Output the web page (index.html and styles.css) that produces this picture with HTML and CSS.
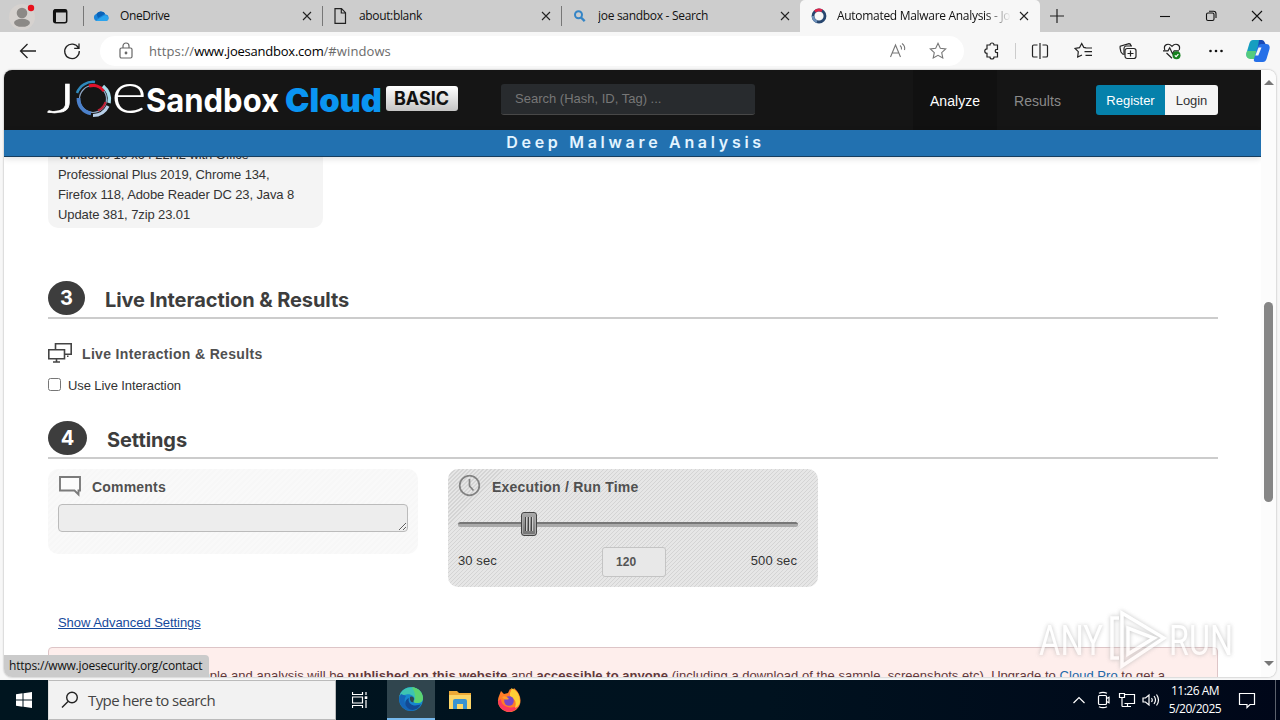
FILE: index.html
```html
<!DOCTYPE html>
<html lang="en">
<head>
    <meta charset="UTF-8">
    <title>Automated Malware Analysis - Joe Sandbox Cloud Basic</title>
    <link rel="stylesheet" href="styles.css">
</head>
<body>
<div class="screen">
    <!-- tab strip -->
    <div class="tabs">
        <div class="profile">
            <svg width="36" height="32" viewBox="0 0 36 32"><circle cx="22" cy="17" r="13" fill="#d6d2cf"/><circle cx="22" cy="13" r="5.300" fill="#8c8986"/><ellipse cx="22" cy="22.800" rx="8" ry="4" fill="#8c8986"/><circle cx="31" cy="8" r="3.200" fill="#e8101c"/></svg>
            <svg width="48" height="32" viewBox="0 0 48 32"><rect x="17.700" y="9.700" width="13" height="13" rx="2" fill="none" stroke="#111" stroke-width="1.500"/><path d="M18 11h12.500" stroke="#111" stroke-width="3"/><path d="M19 12v10" stroke="#111" stroke-width="2"/></svg>
        </div>
        <div class="tab">
            <svg class="tab-icon" viewBox="0 0 16 16"><path d="M4 13a3.600 3.600 0 0 1-.5-7A5 5 0 0 1 12.500 6.500 3.300 3.300 0 0 1 13 13z" fill="#1a84d8"/><path d="M3.500 6A5 5 0 0 1 12 5.800L5 10z" fill="#0a62b8"/><path d="M3 12.500 11 7.500a3.200 3.200 0 0 1 4 4.500 3 3 0 0 1-2 1H4z" fill="#2ba4ee"/></svg>
            <span class="tab-title t-onedrive">OneDrive</span>
            <svg class="tab-close" viewBox="0 0 10 10"><path d="M1 1l8 8M9 1l-8 8"/></svg>
        </div>
        <div class="tab">
            <svg class="tab-icon" viewBox="0 0 16 16"><path d="M3 .7h6.500l4 4v10.600H3zM9.300 1v4h4" fill="none" stroke="#222" stroke-width="1.200"/></svg>
            <span class="tab-title t-blank">about:blank</span>
            <svg class="tab-close" viewBox="0 0 10 10"><path d="M1 1l8 8M9 1l-8 8"/></svg>
        </div>
        <div class="tab">
            <svg class="tab-icon" viewBox="0 0 16 16"><circle cx="7.500" cy="6.800" r="3.500" fill="none" stroke="#3585c6" stroke-width="2"/><path d="M10 9.500l3.700 3.700" stroke="#3585c6" stroke-width="2.400"/></svg>
            <span class="tab-title t-search">joe sandbox - Search</span>
            <svg class="tab-close" viewBox="0 0 10 10"><path d="M1 1l8 8M9 1l-8 8"/></svg>
        </div>
        <div class="tab active">
            <svg class="tab-icon" viewBox="0 0 16 16"><circle cx="8" cy="8" r="6" fill="none" stroke="#27466f" stroke-width="2.800"/><path d="M4 3.500A6 6 0 0 1 11 2.800" fill="none" stroke="#e0244a" stroke-width="2.800"/><path d="M2 8a6 6 0 0 0 4 5.700" fill="none" stroke="#6d8fb9" stroke-width="2.500"/></svg>
            <span class="tab-title t-active">Automated Malware Analysis - Jo</span>
            <svg class="tab-close" viewBox="0 0 10 10"><path d="M1 1l8 8M9 1l-8 8"/></svg>
        </div>
        <svg class="new-tab" viewBox="0 0 14 14"><path d="M7 0v14M0 7h14"/></svg>
        <div class="window-buttons">
            <svg viewBox="0 0 12 12"><path d="M1 6.500h10"/></svg>
            <svg viewBox="0 0 12 12"><rect x="1.500" y="3" width="7.500" height="7.500" rx="1.500"/><path d="M4 1.200h4.500a2.500 2.500 0 0 1 2.500 2.500V8"/></svg>
            <svg viewBox="0 0 12 12"><path d="M1 1l10 10M11 1L1 11"/></svg>
        </div>
    </div>

    <!-- address bar -->
    <div class="toolbar">
        <svg class="nav-icon" viewBox="0 0 20 20"><path d="M18 10H2.500M9.500 3L2.500 10l7 7"/></svg>
        <svg class="nav-icon" viewBox="0 0 20 20"><path d="M16.500 7A7.300 7.300 0 1 0 17.300 10M17 2.500V7.300h-4.800"/></svg>
        <div class="address">
            <svg class="lock" viewBox="0 0 16 18"><rect x="2" y="6" width="12" height="10" rx="1.500"/><path d="M5 6V4a3 3 0 0 1 6 0v2"/><circle cx="8" cy="11" r=".8" fill="#666"/></svg>
            <span class="url"><span>https://</span><b>www.joesandbox.com</b><span>/#windows</span></span>
            <svg class="addr-icon" viewBox="0 0 20 20"><path d="M2.500 16L7.500 4l5 12M4.300 12h6.400M12 4.500q2 1.500 1.500 4M14 2.500q3.500 2.500 2.500 6.500"/></svg>
            <svg class="addr-icon" viewBox="0 0 20 20"><path d="M10 2.300l2.300 5 5.400.6-4 3.700 1.100 5.400-4.800-2.700L5.200 17l1.100-5.400-4-3.700 5.400-.6z"/></svg>
        </div>
        <div class="tools">
            <svg viewBox="0 0 20 20"><path d="M6 4h3a2 2 0 0 1 4 0h3.500v4.300h-.6a1.700 1.700 0 0 0 0 3.400h.6V16H13a2 2 0 0 1-4 0H6v-3.700a2.200 2.200 0 0 1 0-4.500z"/></svg>
            <i></i>
            <svg viewBox="0 0 20 20"><path d="M7.500 4H3.800Q2.500 4 2.500 5.300v9.400Q2.500 16 3.800 16h3.700M12.500 4h3.700q1.300 0 1.300 1.300v9.400q0 1.300-1.300 1.300h-3.700M10 2v16"/></svg>
            <svg viewBox="0 0 20 20"><path d="M12 6.800l-2.200-.4L7.700 2.500 5.500 6.700l-4.400.7 3.200 3.200-.6 5.400L8 14M11.500 7H18M10.500 10.700H18M11.500 14.300H18"/></svg>
            <svg viewBox="0 0 20 20"><path d="M5 13.500L3 11Q1.700 6.500 2.200 5.300L11 2.600q1.500 0 2 2M6 14V7.500Q6 5.300 8 5h6"/><rect x="7" y="7.500" width="11" height="10" rx="2.200"/><path d="M12.500 9.500v6M9.500 12.500h6"/></svg>
            <svg viewBox="0 0 20 20"><path d="M2.800 9C1 3.500 6.500 1.500 10 5.300 13.500 1.500 19 3.500 17.200 9M1 9.800h5l1.700-3 2.800 6 1.700-3H17M4.500 12l5.500 5.200"/><circle cx="14.500" cy="14.300" r="4" fill="#16811e" stroke="none"/><path d="M12.800 14.300l1.300 1.300 2.300-2.500" stroke="#fff"/></svg>
            <svg viewBox="0 0 20 20"><g fill="#111" stroke="none"><circle cx="4.500" cy="10" r="1.300"/><circle cx="10" cy="10" r="1.300"/><circle cx="15.500" cy="10" r="1.300"/></g></svg>
        </div>
        <svg class="copilot" viewBox="0 0 24 24"><path d="M7 1h8q2 0 1.300 2.500L13 16q-1 3-3.500 3H4Q-.5 19 .5 14L3.500 4Q4.500 1 7 1z" fill="#159ec0"/><path d="M1 12h12l-1 5q-1 3-3 3H4Q-.5 19 .5 14z" fill="#55cb7d"/><path d="M17 23H10q-3 0-2-3l3.200-11Q12 5 15 5h5q4.500 0 3.500 5l-3 10q-1 3-3.500 3z" fill="#2670e8"/><path d="M13 1h3q2 0 2.800 2.500L19.500 5H15q-2 0-3 3z" fill="#1749b5"/><path d="M12.500 8.500h3l-3.200 8h-3z" fill="#f7f7f7"/></svg>
    </div>

    <div class="viewport">
        <div class="page">
            <header class="site-header">
                <svg class="logo" width="412" height="48" viewBox="0 0 412 48">
                    <defs><linearGradient id="badge" x1="0" y1="0" x2="0" y2="1"><stop offset="0" stop-color="#fff"/><stop offset="1" stop-color="#c4c4c4"/></linearGradient></defs>
                    <text class="logo-thin" x="-1" y="36.500" textLength="29" lengthAdjust="spacingAndGlyphs">J</text>
                    <circle cx="45" cy="23" r="13.500" fill="none" stroke="#8fa6c4" stroke-width="1.200"/>
                    <g fill="none">
                        <path d="M29 17A17 17 0 0 1 47 6" stroke="#2f88bb" stroke-width="2.500"/>
                        <path d="M41 10A14 14 0 0 1 56 15" stroke="#e0122b" stroke-width="3.200"/>
                        <path d="M55 10A17 17 0 0 1 61 27" stroke="#a6dcec" stroke-width="3.500"/>
                        <path d="M30.500 22A15 15 0 0 0 43 37.500" stroke="#4b80cb" stroke-width="3.800"/>
                        <path d="M45 39.500A17 17 0 0 0 60 30" stroke="#b7cfe9" stroke-width="3.200"/>
                        <path d="M57.500 26A13 13 0 0 1 50 34.500" stroke="#be2238" stroke-width="2.200"/>
                    </g>
                    <text class="logo-thin logo-e" x="63" y="37" textLength="36" lengthAdjust="spacingAndGlyphs">e</text>
                    <text class="logo-bold" x="98" y="36" textLength="133" lengthAdjust="spacingAndGlyphs">Sandbox</text>
                    <text class="logo-bold logo-cloud" x="237" y="36" textLength="97" lengthAdjust="spacingAndGlyphs">Cloud</text>
                    <rect x="338" y="10" width="72" height="25" rx="3" fill="url(#badge)"/>
                    <text class="logo-basic" x="346" y="29" textLength="55" lengthAdjust="spacingAndGlyphs">BASIC</text>
                </svg>
                <input class="search" type="text" placeholder="Search (Hash, ID, Tag) ...">
                <nav class="nav">
                    <a class="nav-link current"><span>Analyze</span></a>
                    <a class="nav-link"><span>Results</span></a>
                </nav>
                <div class="account">
                    <button class="register">Register</button><button class="login">Login</button>
                </div>
            </header>
            <div class="banner">Deep Malware Analysis</div>

            <main class="content">
                <div class="machine">Windows 10 x64 22H2 with Office<br>Professional Plus 2019, Chrome 134,<br>Firefox 118, Adobe Reader DC 23, Java 8<br>Update 381, 7zip 23.01</div>

                <div class="step">
                    <span class="step-number">3</span>
                    <h2 class="h-live">Live Interaction &amp; Results</h2>
                </div>
                <div class="option-title">
                    <svg width="24" height="20" viewBox="0 0 24 20"><path d="M7.500 6V.8h15.700v10.400H17M.8 6.800h15.700v9H.8zM19 13.300h1.500M8.500 16v3M5 19h7" fill="none" stroke="#444" stroke-width="1.600"/></svg>
                    <h3 class="h3-live">Live Interaction &amp; Results</h3>
                </div>
                <label class="check"><input type="checkbox"><span>Use Live Interaction</span></label>

                <div class="step step-settings">
                    <span class="step-number wide">4</span>
                    <h2 class="h-settings">Settings</h2>
                </div>
                <div class="panels">
                    <div class="panel comments">
                        <div class="panel-title">
                            <svg width="24" height="22" viewBox="0 0 24 22"><path d="M2 2h20v13.500h-1.500v4L16.500 15.500H2z" fill="#fcfcfc" stroke="#7b7b7b" stroke-width="1.900"/></svg>
                            <h3 class="h3-comments">Comments</h3>
                        </div>
                        <textarea class="comment-box"></textarea>
                    </div>
                    <div class="panel runtime">
                        <div class="panel-title">
                            <svg width="24" height="22" viewBox="0 0 24 22"><circle cx="11.500" cy="10.500" r="9.800" fill="none" stroke="#828282" stroke-width="1.700"/><path d="M11.500 4v7l4 4.500" fill="none" stroke="#828282" stroke-width="1.700"/></svg>
                            <h3 class="h3-runtime">Execution / Run Time</h3>
                        </div>
                        <div class="slider">
                            <span class="rail"></span>
                            <span class="handle"><i></i><i></i><i></i></span>
                            <span class="rail rest"></span>
                        </div>
                        <div class="range">
                            <span>30 sec</span>
                            <span class="value">120</span>
                            <span class="range-max">500 sec</span>
                        </div>
                    </div>
                </div>
                <a class="advanced" href="#">Show Advanced Settings</a>
                <div class="alert">The sample and analysis will be <b>published on this website</b> and <b>accessible to anyone</b> (including a download of the sample, screenshots etc). Upgrade to <a>Cloud Pro</a> to get a</div>
            </main>
        </div>
        <div class="scrollbar">
            <span class="arrow up"></span>
            <span class="thumb"></span>
            <span class="arrow down"></span>
        </div>
        <div class="status"><span>https://www.joesecurity.org/contact</span></div>
        <svg class="watermark" width="206" height="64" viewBox="0 0 206 64">
            <text x="4" y="47" textLength="64" lengthAdjust="spacingAndGlyphs">ANY</text>
            <path d="M84 10h-7v40h7M87 5l42 25-42 28zM93 20v26l26-16z"/>
            <text x="134" y="47" textLength="64" lengthAdjust="spacingAndGlyphs">RUN</text>
        </svg>
    </div>

    <div class="taskbar">
        <div class="start"><svg width="16" height="16" viewBox="0 0 16 16"><path d="M0 2.300L6.500 1.300v6.200H0zM7.500 1.200L16 0v7.500H7.500zM0 8.500h6.500v6.200L0 13.700zM7.500 8.500H16V16l-8.500-1.200z" fill="#fff"/></svg></div>
        <div class="task-search">
            <svg width="18" height="18" viewBox="0 0 18 18"><circle cx="11" cy="6.500" r="5.300" fill="none" stroke="#222" stroke-width="1.400"/><path d="M7 10.500L1 16.500" stroke="#222" stroke-width="1.400"/></svg>
            <span>Type here to search</span>
        </div>
        <div class="app"><svg width="16" height="16" viewBox="0 0 16 16"><path d="M.5 0v2.500h10V0M.5 5h10v6H.5zM.5 16v-2.500h10V16M14 0v3M14 8v8" fill="none" stroke="#fff" stroke-width="1.200"/><path d="M12.700 4.300h2.600V7h-2.600z" fill="#fff"/></svg></div>
        <div class="app running">
            <svg width="24" height="24" viewBox="0 0 24 24"><circle cx="12" cy="12" r="12" fill="#1687ce"/><path d="M.5 9C3-2 22-4 24 11c0 6-8 6-9.500 3.500 3-3-1-8-7-7C3 8 1 10 .5 9z" fill="#3dc4b2"/><path d="M13 0c7 1 11 6 11 11 0 6-8 6-9.500 3.500 3-3 1-7 1-9z" fill="#5cd370"/><path d="M7 9c-4 6 1 13 8 14.500C3 26-3 13 2 7z" fill="#1565b8"/><path d="M10 11c-2 5 4 10 12 6-3 7-11 8-15 2-2-3 0-7 3-8z" fill="#134a94"/><path d="M11 10c2-1 4 0 4 2 0 1-1 2-.5 3-2.500 1-4-2-3.500-5z" fill="#30454e"/></svg>
        </div>
        <div class="app"><svg width="22" height="20" viewBox="0 0 22 20"><path d="M0 1h8l2 2h12v16H0z" fill="#eda936"/><path d="M0 5h22v14H0z" fill="#fcd668"/><path d="M4 11q0-2 2-2h10q2 0 2 2v8h-4v-5H8v5H4z" fill="#3993d1"/></svg></div>
        <div class="app"><svg width="24" height="24" viewBox="0 0 24 24"><path d="M2 8L4 3l3 3 4-1 2-4 3 1 1-2q6 5 6.500 12A11.300 11.300 0 1 1 2 8z" fill="#ff7b28"/><path d="M1 13a11 11 0 0 0 21.500 3Q16 22 8 18q-4-2-4-7z" fill="#fb385e"/><path d="M13 5q2-4 1-5 9 3 9 14-1 5-5 6 3-8-5-12z" fill="#ffcf35"/><circle cx="12" cy="13" r="4.800" fill="#7746c9"/><path d="M5 9q4-2 7 2-3 1-5 0z" fill="#ff9c2a"/></svg></div>
        <div class="tray">
            <svg viewBox="0 0 20 20"><path d="M4.500 13L10 7.500l5.500 5.500"/></svg>
            <svg viewBox="0 0 20 20"><rect x="5.500" y="5.500" width="8" height="9" rx="1"/><path d="M13.500 8.500l2.500-1.200v5.400l-2.500-1.200M6 3.300q4-2 8 0M6 16.700q4 2 8 0"/></svg>
            <svg viewBox="0 0 20 20"><path d="M7.500 4.500h10v9h-10M5 16.500h9M10.500 14v2.500M2.500 3.500h5v4h-5zM5 7.500v9"/></svg>
            <svg viewBox="0 0 20 20"><path d="M2 8h2.500L8 5v10l-3.500-3H2zM10.500 8q1.500 2 0 4M13 6q3 4 0 8M15.500 4.500q4 5.500 0 11"/></svg>
            <div class="clock"><span>11:26 AM</span><span class="date">5/20/2025</span></div>
            <svg class="notify" viewBox="0 0 20 20"><path d="M2.500 3.500h15v11H13l-3 3v-3H2.500z"/></svg>
        </div>
    </div>
</div>
</body>
</html>
```
FILE: styles.css
```css
* {
    box-sizing: border-box;
}
body {
    margin: 0;
    background: #f7f7f7;
    font-family: "Liberation Sans", Arial, sans-serif;
    font-size: 13px;
    color: #333;
}
svg {
    flex-shrink: 0;
}
.screen {
    width: 1280px;
    height: 720px;
    display: flex;
    flex-direction: column;
    overflow: hidden;
}

/* browser tabs */
.tabs {
    height: 32px;
    display: flex;
    align-items: center;
    background: #cdcdcd;
    font-family: "Open Sans", "Noto Sans", sans-serif;
    font-size: 12px;
    color: #111;
}
.profile {
    display: flex;
    width: 83px;
}
.tab {
    width: 239px;
    height: 32px;
    display: flex;
    align-items: center;
    padding: 0 10px 0 10px;
    background: linear-gradient(#777, #777) 0 50% / 1px 20px no-repeat;
}
.tab.active {
    width: 240px;
    background: #f7f7f7;
    border-radius: 5px 5px 0 0;
    padding-left: 11px;
    padding-right: 11px;
}
.tab-icon {
    width: 16px;
    height: 16px;
    margin-right: 11px;
}
.active .tab-icon {
    margin-right: 10px;
}
.tab-title {
    flex: 1;
    overflow: hidden;
    white-space: nowrap;
    line-height: 20px;
}
.t-onedrive {
    letter-spacing: -0.4px;
}
.t-blank {
    letter-spacing: -0.35px;
}
.t-search {
    letter-spacing: -0.3px;
}
.t-active {
    letter-spacing: -0.3px;
    margin-right: 8px;
    -webkit-mask-image: linear-gradient(90deg, #000 85%, transparent);
    mask-image: linear-gradient(90deg, #000 85%, transparent);
}
.tab-close {
    width: 10px;
    height: 10px;
    stroke: #222;
    stroke-width: 1.1;
}
.new-tab {
    width: 14px;
    height: 14px;
    margin-left: 10px;
    stroke: #222;
    stroke-width: 1.2;
}
.window-buttons {
    margin-left: auto;
    display: flex;
    gap: 34px;
    padding-right: 17px;
}
.window-buttons svg {
    width: 12px;
    height: 12px;
    fill: none;
    stroke: #111;
    stroke-width: 1.1;
}

/* toolbar */
.toolbar {
    height: 38px;
    display: flex;
    align-items: center;
    padding-left: 18px;
    background: #f7f7f7;
}
.nav-icon {
    width: 20px;
    height: 20px;
    margin-right: 24px;
    fill: none;
    stroke: #222;
    stroke-width: 1.3;
}
.address {
    width: 864px;
    height: 30px;
    margin-left: -6px;
    display: flex;
    align-items: center;
    padding: 0 16px 0 18px;
    border-radius: 15px;
    background: #fff;
}
.lock {
    width: 16px;
    height: 18px;
    margin-right: 15px;
    fill: none;
    stroke: #666;
    stroke-width: 1.2;
}
.url {
    flex: 1;
    font-family: "Open Sans", "Noto Sans", sans-serif;
    font-size: 13px;
    letter-spacing: 0.1px;
    color: #6b6b6b;
}
.url b {
    font-weight: normal;
    color: #000;
    letter-spacing: -0.23px;
}
.addr-icon {
    width: 20px;
    height: 20px;
    margin-left: 20px;
    fill: none;
    stroke: #777;
    stroke-width: 1.1;
}
.tools {
    display: flex;
    align-items: center;
    gap: 24px;
    margin-left: 17px;
}
.tools i {
    width: 1px;
    height: 16px;
    margin: 0 -10px 0 -10px;
    background: #ccc;
}
.tools svg {
    width: 20px;
    height: 20px;
    fill: none;
    stroke: #222;
    stroke-width: 1.2;
}
.copilot {
    width: 24px;
    height: 24px;
    margin-left: auto;
    margin-right: 10px;
}

/* page area */
.viewport {
    position: relative;
    height: 607px;
    margin: 0 4px 3px;
    display: flex;
    background: #fff;
    border-radius: 8px;
    overflow: hidden;
    box-shadow: 0 0 2px #999;
}
.page {
    width: 1257px;
    display: flex;
    flex-direction: column;
    overflow: hidden;
}
.site-header {
    height: 60px;
    flex-shrink: 0;
    display: flex;
    align-items: center;
    padding: 0 43px 0 44px;
    background: #151515;
}
.logo {
    overflow: visible;
}
.logo text {
    font-family: Inter, "Open Sans", sans-serif;
}
.logo .logo-thin {
    font-family: Lato, "Open Sans", sans-serif;
    font-weight: 300;
    font-size: 41px;
    fill: #fff;
    stroke: #fff;
    stroke-width: 0.5;
}
.logo .logo-e {
    font-size: 58px;
    stroke-width: 0;
}
.logo .logo-bold {
    font-size: 33px;
    font-weight: 700;
    fill: #fff;
}
.logo .logo-cloud {
    font-weight: 900;
    fill: #0a95f2;
}
.logo .logo-basic {
    font-size: 19px;
    font-weight: 700;
    fill: #111;
}
.search {
    width: 254px;
    height: 31px;
    margin: 0 0 2px 41px;
    padding: 0 14px;
    border: 0;
    border-bottom: 1px solid #484848;
    border-radius: 3px;
    background: #282b2e;
    font-family: inherit;
    font-size: 13px;
}
.search::placeholder {
    color: #777;
}
.nav {
    display: flex;
    height: 60px;
    margin-left: auto;
}
.nav-link {
    width: 83px;
    padding-top: 22px;
    padding-right: 2px;
    text-align: center;
    font-size: 14px;
    line-height: 18px;
    letter-spacing: 0.05px;
    color: #8a8a8a;
}
.nav-link.current {
    width: 84px;
    padding-right: 0;
    background: #111;
    color: #fff;
}
.account {
    display: flex;
    margin-left: 16px;
}
.account button {
    height: 30px;
    padding: 0;
    border: 0;
    font-family: inherit;
    font-size: 13px;
}
.register {
    width: 69px;
    border-radius: 3px 0 0 3px;
    background: #0581ab;
    color: #fff;
}
.login {
    width: 53px;
    border-radius: 0 3px 3px 0;
    background: #f5f5f5;
    color: #333;
    letter-spacing: -0.1px;
}
.banner {
    height: 27px;
    flex-shrink: 0;
    position: relative;
    padding-left: 6px;
    border-bottom: 1px solid #163e5f;
    background: #2271b0;
    box-shadow: 0 2px 6px rgba(0, 0, 0, 0.12);
    font-family: Inter, "Open Sans", sans-serif;
    font-size: 16px;
    font-weight: 600;
    line-height: 25px;
    letter-spacing: 3.7px;
    text-align: center;
    color: #e3f4ff;
}
.content {
    flex: 1;
    padding: 0 43px 0 44px;
    overflow: hidden;
}
.machine {
    width: 275px;
    height: 93px;
    margin-top: -22px;
    padding: 10px 10px 3px;
    border-radius: 0 0 10px 10px;
    background: #f4f4f4;
    line-height: 20px;
    letter-spacing: -0.11px;
    white-space: nowrap;
}

.step {
    display: flex;
    height: 38px;
    margin-top: 53px;
    border-bottom: 2px solid #ccc;
}
.step-settings {
    margin-top: 28px;
}
.step-number {
    width: 37px;
    height: 34px;
    border-radius: 50%;
    background: #3d3d3d;
    font-family: Inter, "Open Sans", sans-serif;
    font-size: 20px;
    font-weight: 700;
    line-height: 34px;
    text-align: center;
    color: #fff;
}
.step-number.wide {
    width: 39px;
}
.step h2 {
    margin: 0 0 0 20px;
    font-family: Inter, "Open Sans", sans-serif;
    font-size: 20px;
    font-weight: 700;
    line-height: 38px;
    letter-spacing: -0.08px;
    color: #3d3d3d;
}
.option-title {
    display: flex;
    align-items: center;
    gap: 10px;
    height: 20px;
    margin-top: 24px;
}
h3 {
    margin: 0;
    font-size: 14px;
    line-height: 20px;
    letter-spacing: 0.33px;
    color: #505050;
}
h3.h3-live {
    padding-top: 2px;
}
h3.h3-comments {
    letter-spacing: 0.2px;
}
h3.h3-runtime {
    letter-spacing: 0.22px;
}
.check {
    display: flex;
    align-items: center;
    height: 16px;
    margin-top: 14px;
    padding-bottom: 1px;
    font-size: 13px;
    letter-spacing: -0.1px;
}
.check input {
    width: 13px;
    height: 13px;
    margin: 0 7px 0 0;
}
.check span {
    padding-top: 2px;
}

/* settings */
.panels {
    display: flex;
    align-items: flex-start;
    gap: 30px;
    margin-top: 10px;
}
.panel {
    width: 370px;
    padding: 6px 10px;
    border-radius: 10px;
}
.comments {
    height: 85px;
    background: repeating-linear-gradient(135deg, #f9f9f9 0 2px, #f7f7f7 2px 4px);
}
.runtime {
    height: 118px;
    background: repeating-linear-gradient(135deg, #e6e6e6 0 2.1px, #d4d4d4 2.1px 2.83px);
}
.panel-title {
    display: flex;
    align-items: flex-start;
    gap: 10px;
    height: 29px;
}
.panel-title h3 {
    line-height: 24px;
}
.comment-box {
    display: block;
    width: 350px;
    height: 28px;
    border: 1px solid #bbb;
    border-radius: 4px;
    background: #ededed;
}
.slider {
    display: flex;
    align-items: center;
    height: 24px;
    margin-top: 8px;
}
.rail {
    width: 63px;
    height: 5px;
    border-radius: 3px 0 0 3px;
    border-top: 2px solid #777;
    background: #aaa;
}
.rail.rest {
    width: 261px;
    border-radius: 0 3px 3px 0;
}
.handle {
    width: 16px;
    height: 24px;
    display: flex;
    justify-content: center;
    align-items: center;
    gap: 1px;
    border: 1px solid #444;
    border-radius: 3px;
    background: linear-gradient(#aaa, #737373);
    box-shadow: inset 0 0 0 1px #aaa;
}
.handle i {
    width: 2px;
    height: 14px;
    background: #ccc;
    border-left: 1px solid #444;
}
.range {
    display: grid;
    grid-template-columns: 144px 64px 131px;
    margin-top: 11px;
    line-height: 28px;
    letter-spacing: 0.1px;
}
.range-max {
    text-align: right;
}
.value {
    height: 30px;
    padding-left: 13px;
    border: 1px solid #c4c4c4;
    border-radius: 3px;
    background: #e8e8e8;
    font-size: 12px;
    font-weight: bold;
    line-height: 29px;
    color: #555;
}
.advanced {
    display: block;
    width: max-content;
    margin: 26px 0 0 10px;
    line-height: 20px;
    letter-spacing: -0.05px;
    color: #164a9c;
}
.alert {
    height: 60px;
    margin-top: 14px;
    padding: 18px 0 0 110px;
    border: 1px solid #ddc5c7;
    border-radius: 4px;
    background: #feeeec;
    line-height: 20px;
    letter-spacing: 0.04px;
    white-space: nowrap;
    color: #62393c;
}
.alert a {
    color: #2168a8;
}

.scrollbar {
    width: 15px;
    display: flex;
    flex-direction: column;
    align-items: center;
    padding: 10px 0 11px;
    background: #fcfcfc;
}
.arrow {
    border: 5px solid transparent;
    border-top-width: 0;
    border-bottom: 5px solid #777;
}
.arrow.down {
    margin-top: auto;
    transform: rotate(180deg);
}
.thumb {
    width: 9px;
    height: 200px;
    margin-top: 217px;
    border-radius: 5px;
    background: #868686;
}
.status {
    position: absolute;
    left: 0;
    bottom: 0;
    width: 205px;
    height: 22px;
    padding-left: 5px;
    border-radius: 0 4px 0 0;
    background: #cbcbcb;
    font-family: "Open Sans", "Noto Sans", sans-serif;
    font-size: 12px;
    line-height: 22px;
    letter-spacing: -0.2px;
    white-space: nowrap;
    color: #111;
}
.watermark {
    position: absolute;
    right: 35px;
    bottom: 5px;
    opacity: 0.7;
    filter: drop-shadow(0 0 2px #aaa);
}
.watermark text {
    font-family: Roboto, "Open Sans", sans-serif;
    font-size: 43px;
    fill: #fff;
}
.watermark path {
    fill: none;
    stroke: #fff;
    stroke-width: 3.5;
}

/* windows taskbar */
.taskbar {
    height: 40px;
    flex-shrink: 0;
    display: flex;
    background: linear-gradient(90deg, #00151f, #00121f 60%, #000719);
    font-family: "Open Sans", "Noto Sans", sans-serif;
}
.start,
.app {
    width: 48px;
    display: flex;
    align-items: center;
    justify-content: center;
    margin-right: 1px;
}
.start {
    margin-right: 0;
}
.task-search {
    width: 288px;
    display: flex;
    align-items: center;
    gap: 9px;
    padding-left: 12px;
    border: 1px solid #bbb;
    border-left-color: #ddd;
    background: #f2f2f2;
    font-size: 15px;
    letter-spacing: -0.58px;
    color: #444;
}
.app.running {
    margin-left: 2px;
    background: #30454e;
    border-bottom: 2px solid #76b9ed;
}
.tray {
    display: flex;
    align-items: center;
    margin-left: auto;
    padding-right: 4px;
    border-right: 1px solid #5c626d;
    margin-right: 4px;
}
.tray svg {
    width: 20px;
    height: 20px;
    margin-right: 4px;
    fill: none;
    stroke: #fff;
    stroke-width: 1.2;
}
.clock {
    width: 62px;
    display: flex;
    flex-direction: column;
    align-items: center;
    padding-right: 2px;
    font-size: 12px;
    line-height: 18px;
    letter-spacing: -0.5px;
    color: #fff;
}
.tray .notify {
    margin: 0 14px 0 10px;
}
```
